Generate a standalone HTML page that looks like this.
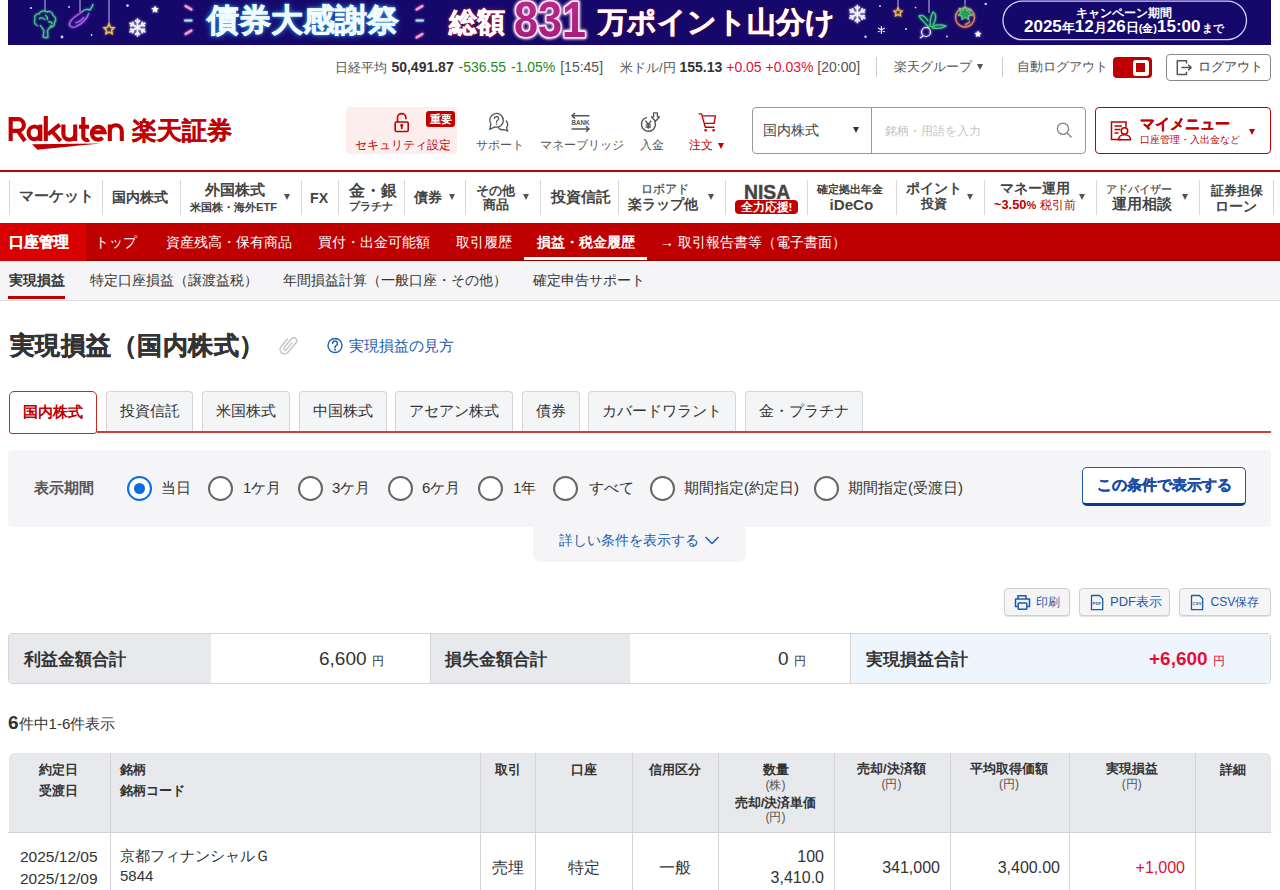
<!DOCTYPE html>
<html lang="ja"><head><meta charset="utf-8">
<style>
*{margin:0;padding:0;box-sizing:border-box}
html,body{width:1280px;height:890px;overflow:hidden;background:#fff}
body{font-family:"Liberation Sans",sans-serif;color:#333;position:relative}
.a{position:absolute;white-space:nowrap}
.c{display:flex;align-items:center;justify-content:center}
/* banner */
#banner{left:8px;top:0;width:1263px;height:45px;background:#1b0c6a;overflow:hidden}
/* top bar */
.tb{font-size:14px;line-height:20px;top:57px;color:#555}
.sep{position:absolute;width:1px;background:#ccc}
/* nav */
.nv{position:absolute;top:172px;height:50px;display:flex;flex-direction:column;align-items:center;justify-content:center;color:#333;font-weight:bold;text-align:center}
.nv .l1{font-size:15px;line-height:17px}
.nv .l2{font-size:15px;line-height:17px}
.nv .sm{font-size:12px;line-height:14px}
.nt{font-weight:bold;color:#444;line-height:20px}
.tri{position:absolute;width:0;height:0;border-left:3.25px solid transparent;border-right:3.25px solid transparent;border-top:6px solid #555}
/* red bar */
#red{left:0;top:223.3px;width:1280px;height:38.2px;background:#bf0000;border-bottom:2px solid #980000}
.rt{top:232px;color:#fff;font-size:14px;line-height:20px}
/* subnav */
#sub{left:0;top:261px;width:1280px;height:40px;background:#f5f5f7;border-bottom:1.6px solid #dedede}
.st{top:271px;color:#333;font-size:13.5px;line-height:20px}
/* tabs */
.tab{position:absolute;top:391px;height:41px;padding-bottom:2px;border:1px solid #d6d6d6;border-bottom:none;background:#f4f5f7;border-radius:4px 4px 0 0;font-size:15px;color:#333;display:flex;align-items:center;justify-content:center}
.radio{position:absolute;top:476px;width:25px;height:25px;border:2.5px solid #666;border-radius:50%;background:#fff}
.rl{top:478px;font-size:15px;line-height:20px;color:#333}
.hl{top:137px;font-size:11.8px;line-height:17px;color:#555}
.btn3{position:absolute;top:588px;height:28px;border:1px solid #cfcfcf;border-radius:4px;background:#f5f5f5;box-shadow:0 1px 1px rgba(0,0,0,.12);color:#1a5aae;font-size:14px;display:flex;align-items:center;justify-content:center}
th,td{position:absolute}
.thl{font-size:13px;font-weight:bold;color:#333;line-height:16px;text-align:center}
.thp2{font-size:12px;color:#555;line-height:16px;text-align:center}
.th{position:absolute;font-size:13px;font-weight:bold;color:#333;line-height:21px;text-align:center}
.thp{font-size:12px;font-weight:normal;color:#555;line-height:14px}
.vl{position:absolute;width:1px;background:#d5d5d8}
.td{position:absolute;font-size:16px;color:#333;line-height:21px}
</style></head><body>

<!-- BANNER -->
<svg class="a" style="left:0;top:0" width="1280" height="45" viewBox="0 0 1280 45">
<defs>
<filter id="gl" x="-30%" y="-30%" width="160%" height="160%"><feGaussianBlur stdDeviation="1.2" result="b"/><feMerge><feMergeNode in="b"/><feMergeNode in="SourceGraphic"/></feMerge></filter>
<filter id="gl2" x="-30%" y="-30%" width="160%" height="160%"><feGaussianBlur stdDeviation="1.8" result="b"/><feMerge><feMergeNode in="b"/><feMergeNode in="b"/><feMergeNode in="SourceGraphic"/></feMerge></filter>
</defs>
<rect x="8" y="0" width="1263" height="45" fill="#16086b"/>
<g fill="#fff" opacity=".85">
<circle cx="31" cy="8" r="1.1"/><circle cx="69" cy="7" r=".9"/><circle cx="62" cy="37" r="1.4"/><circle cx="91.6" cy="35" r=".9"/><circle cx="127.5" cy="5.6" r="1.3"/>
<circle cx="880" cy="6" r=".9"/><circle cx="915.6" cy="7.6" r=".9"/><circle cx="906" cy="29" r="1"/><circle cx="947" cy="36.5" r=".9"/><circle cx="865.5" cy="36.7" r="1.2"/><circle cx="985.7" cy="3.9" r="1.2"/>
</g>
<g fill="#fff" filter="url(#gl)">
<path d="M155 5.5l1.1 2.6 2.8.2-2.1 1.8.7 2.7-2.5-1.5-2.4 1.5.7-2.7-2.1-1.8 2.8-.2z"/>
<path d="M978 30.5l1 2.3 2.5.2-1.9 1.6.6 2.4-2.2-1.3-2.2 1.3.6-2.4-1.9-1.6 2.5-.2z"/>
</g>
<!-- strings -->
<g stroke="#d8d0f0" stroke-width="1" opacity=".9">
<line x1="45" y1="0" x2="45" y2="12"/><line x1="80" y1="0" x2="80" y2="12"/><line x1="109" y1="0" x2="109" y2="24"/>
<line x1="898" y1="0" x2="898" y2="9"/><line x1="929" y1="0" x2="929" y2="13"/><line x1="965" y1="0" x2="965" y2="5"/>
</g>
<!-- broccoli -->
<g fill="none" stroke="#3fd07a" stroke-width="1.2" filter="url(#gl)">
<path d="M38 26c-3-1-4.5-4-3-6.5-1.5-3 1-6 4-5.5 1-3 5-4 7.5-2 3-1.5 6.5.5 6.5 3.5 3 1 3.5 5 1.5 7 .5 3-2 5-4.5 4.5"/>
<path d="M40 25c1 2 3 3 4 6l-1 6c2 1 4 1 5 0l-.5-6c1-3 3-4 4-6"/>
<path d="M39 19c2-2 5-1 6 1M45 15c2 1 3 3 2 5M48 22c2-1 4 0 4 2"/>
</g>
<!-- eggplant -->
<g fill="none" stroke="#b760f0" stroke-width="1.2" filter="url(#gl)">
<path d="M82 12c-5 3-10 6-12 10-2 4 1 6 5 5 6-2 12-8 14-14"/><path d="M75 23c4-1 7-3 9-6"/>
<path d="M82 12c2-3 6-3 8-2 2-3 3-5 3-6" stroke="#4fd890"/>
</g>
<!-- star hanging -->
<path d="M109 24l1.6 3.4 3.6.4-2.7 2.4.8 3.6-3.3-1.9-3.2 1.9.8-3.6-2.7-2.4 3.6-.4z" fill="none" stroke="#f3c550" stroke-width="1.2" filter="url(#gl)"/>
<!-- snowflakes -->
<g stroke="#f4f0ff" stroke-width="1.6" stroke-linecap="round" filter="url(#gl)">
<path d="M137.5 27.5L137.5 19.0M137.5 22.8L139.6 20.7M137.5 22.8L135.4 20.7M137.5 27.5L130.1 23.2M133.5 25.2L132.7 22.3M133.5 25.2L130.6 25.9M137.5 27.5L130.1 31.8M133.5 29.8L130.6 29.1M133.5 29.8L132.7 32.7M137.5 27.5L137.5 36.0M137.5 32.2L135.4 34.3M137.5 32.2L139.6 34.3M137.5 27.5L144.9 31.8M141.5 29.8L142.3 32.7M141.5 29.8L144.4 29.1M137.5 27.5L144.9 23.2M141.5 25.2L144.4 25.9M141.5 25.2L142.3 22.3"/>
</g>
<g stroke="#f4f0ff" stroke-width="1.6" stroke-linecap="round" filter="url(#gl)">
<path d="M857.3 14.0L857.3 5.5M857.3 9.3L859.4 7.2M857.3 9.3L855.2 7.2M857.3 14.0L849.9 9.8M853.3 11.7L852.5 8.8M853.3 11.7L850.4 12.4M857.3 14.0L849.9 18.2M853.3 16.3L850.4 15.6M853.3 16.3L852.5 19.2M857.3 14.0L857.3 22.5M857.3 18.7L855.2 20.8M857.3 18.7L859.4 20.8M857.3 14.0L864.7 18.3M861.3 16.3L862.1 19.2M861.3 16.3L864.2 15.6M857.3 14.0L864.7 9.8M861.3 11.7L864.2 12.4M861.3 11.7L862.1 8.8"/>
</g>
<g stroke="#f4f0ff" stroke-width="1.2" stroke-linecap="round">
<path d="M881.4 26.5v7M878.4 28.2l6 3.5M878.4 31.7l6-3.5"/>
</g>
<path d="M898 8l1.3 2.7 3 .3-2.2 2 .6 2.9-2.7-1.5-2.6 1.5.6-2.9-2.2-2 3-.3z" fill="none" stroke="#f3c550" stroke-width="1.1" filter="url(#gl)"/>
<!-- turnip -->
<g fill="none" stroke="#3fd07a" stroke-width="1.3" filter="url(#gl)">
<path d="M929 28c-3-5-8-8-10-12 3-2 7 1 9 5M930 27c0-5 0-10 3-15 4 2 3 8 0 13M931 27c4-2 9-3 15 -1-3 2-8 3-14 2"/>
</g>
<g fill="none" stroke="#e9e4ff" stroke-width="1.2" filter="url(#gl)"><circle cx="926" cy="32" r="4.5"/><path d="M923 36l-3 2"/></g>
<!-- tomato -->
<g fill="none" stroke="#e8845a" stroke-width="1.3" filter="url(#gl)"><circle cx="965" cy="17.5" r="9.5"/><path d="M970 21c-1 2-3 3-5 3.5"/></g>
<path d="M959 8l4 3 2-5 2 5 4-2-2 4 4 2-5 1 1 4-4-3-3 3 0-4-4-1 3-2z" fill="#2e9a55" stroke="#6fe0a0" stroke-width=".8" filter="url(#gl)"/>
<!-- dashes -->
<g stroke-width="2.2" stroke-linecap="round" filter="url(#gl)">
<path d="M185.5 6l6 3.5" stroke="#ff9ad0"/><path d="M185 20.5h6.5" stroke="#a8e8ff"/><path d="M185.5 34l6-3.5" stroke="#ff9ad0"/>
<path d="M422.5 6l-6 3.5" stroke="#ff9ad0"/><path d="M423 20.5h-6.5" stroke="#a8e8ff"/><path d="M422.5 34l-6 3.5" stroke="#ff9ad0"/>
</g>
<!-- pill -->
<rect x="1003" y="1.2" width="243.5" height="38.5" rx="19.2" fill="none" stroke="#d6d0ff" stroke-width="1.3"/>
</svg>
<div id="saiken" class="a" style="left:207.2px;top:-1.25px;font-size:32.01px;line-height:42px;font-weight:bold;color:#f2fbff;text-shadow:0 0 3px #39b6ff,0 0 6px #2a8fe0;-webkit-text-stroke:.6px #f2fbff;letter-spacing:0">債券大感謝祭</div>
<div id="sogaku" class="a" style="left:448.9px;top:0.75px;font-size:28.44px;line-height:42px;font-weight:bold;color:#fff;text-shadow:0 0 2px #c02050,0 0 4px #c02050;-webkit-text-stroke:.5px #fff">総額</div>
<svg class="a" style="left:500px;top:0" width="100" height="45" viewBox="500 0 100 45"><defs><linearGradient id="g831" x1="0" y1="0" x2="0" y2="1"><stop offset="0" stop-color="#c02a90"/><stop offset="1" stop-color="#a01c78"/></linearGradient></defs>
<text x="514" y="37" font-family="Liberation Sans" font-weight="bold" font-size="50" fill="url(#g831)" stroke="#ffe6f6" stroke-width="3.2" paint-order="stroke" stroke-linejoin="round" textLength="72" lengthAdjust="spacingAndGlyphs" filter="url(#gl2)">831</text></svg>
<div id="man" class="a" style="left:597.8px;top:0.5px;font-size:28.86px;line-height:42px;font-weight:bold;color:#fff;text-shadow:0 0 2px #8a0a30,0 0 3px #8a0a30;-webkit-text-stroke:.5px #fff">万ポイント山分け</div>
<div id="camp1" class="a" style="left:1076px;top:3.5px;font-size:12.3px;line-height:18px;font-weight:bold;color:#fff">キャンペーン期間</div>
<div id="camp2" class="a" style="left:1024px;top:14.5px;font-size:17px;line-height:24px;font-weight:bold;color:#fff">2025<span style="font-size:13px">年</span>12<span style="font-size:13px">月</span>26<span style="font-size:13px">日</span><span style="font-size:11px">(金)</span>15:00<span style="font-size:10.5px;margin-left:2px">まで</span></div>


<!-- TOP BAR -->
<div class="a tb" style="left:334.5px;word-spacing:1px"><span style="font-size:13px">日経平均</span> <b style="color:#333">50,491.87</b> <span style="color:#1e8a1e">-536.55 -1.05%</span> [15:45]</div>
<div class="a tb" style="left:620px"><span style="font-size:13px">米ドル/円</span> <b style="color:#333">155.13</b> <span style="color:#e0103a">+0.05 +0.03%</span> [20:00]</div>
<div class="sep" style="left:876px;top:57px;height:20px"></div>
<div class="a tb" style="left:894px;font-size:13.3px">楽天グループ</div><div class="tri" style="left:976.5px;top:64px;border-left-width:3.5px;border-right-width:3.5px;border-top-width:6px"></div>
<div class="sep" style="left:1002px;top:57px;height:20px"></div>
<div class="a tb" style="left:1017px;font-size:13.3px">自動ログアウト</div>
<div class="a" style="left:1113px;top:57px;width:38.5px;height:21px;background:#c00000;border-radius:4px"><div class="a" style="left:19.5px;top:2.5px;width:16px;height:16px;background:#fff;border-radius:3px"><div class="a" style="left:3.8px;top:3.8px;width:8.4px;height:8.4px;background:#c00000"></div></div></div>
<div class="a" style="left:1166px;top:54px;width:105px;height:27px;border:1px solid #888;border-radius:4px;background:#fff"></div>
<svg class="a" style="left:1170px;top:55px" width="30" height="25" viewBox="1170 55 30 25" fill="none"><g stroke="#555" stroke-width="1.5" stroke-linejoin="round"><path d="M1186.5 63.5v-2.7h-9.2v13.6h9.2v-2.7"/><path d="M1181.5 67.6h9.5M1188.3 64.8l2.8 2.8-2.8 2.8"/></g></svg>
<div class="a tb" style="left:1198px;color:#444;font-size:13px">ログアウト</div>

<!-- HEADER -->
<svg class="a" style="left:0;top:100px" width="250" height="60" viewBox="0 100 250 60">
<g fill="none" stroke="#bf0000" stroke-width="4.1">
<path d="M10.7 141V119.1h7.3a5.9 5.9 0 0 1 0 11.8h-7.3M17.6 130.5L25 141"/>
<path d="M40.3 124.6V141"/><ellipse cx="34.4" cy="132.8" rx="5.8" ry="6.3"/>
<path d="M45.8 115.9V141M59.8 124.6L47.8 134.3M51.8 131L60.6 141"/>
<path d="M63.4 124.6v9.2a5.9 5.9 0 0 0 11.8 0v-9.2M75.2 133v8"/>
<path d="M83.3 117v19.5a3.6 3.6 0 0 0 5.6 3M79 126.7h10"/>
<path d="M91.8 132.2h12.7a6.4 6.4 0 1 0-1.9 5.6"/>
<path d="M109.8 141v-16.4M109.8 131.3a6 6 0 0 1 12 0V141"/>
</g>
<path d="M32 144.3L101 143.4C80 145.5 55 147.5 37.5 149.8Z" fill="#bf0000"/>
</svg>
<div class="a" style="left:132px;top:115px;font-size:25px;line-height:30px;font-weight:bold;color:#bf0000;-webkit-text-stroke:.3px #bf0000">楽天証券</div>
<div class="a" style="left:346px;top:107px;width:111px;height:47px;background:#fdeeee;border-radius:4px"></div>
<div class="a c" style="left:426px;top:111px;width:29px;height:16px;background:#c00000;color:#fff;font-size:11px;font-weight:bold;border-radius:3px">重要</div>
<div class="a hl" style="left:355px;color:#c00000">セキュリティ設定</div>
<div class="a hl" style="left:476px">サポート</div>
<div class="a hl" style="left:540px">マネーブリッジ</div>
<div class="a hl" style="left:640px">入金</div>
<div class="a hl" style="left:689px;color:#c00000">注文</div><div class="tri" style="left:717.5px;top:142.5px;border-top-color:#c00000"></div>
<!-- search -->
<div class="a" style="left:752px;top:107px;width:334px;height:47px;border:1px solid #999;border-radius:4px;background:#fff"></div>
<div class="a" style="left:871px;top:108px;width:1px;height:45px;background:#999"></div>
<div class="a" style="left:763px;top:120.5px;font-size:13.7px;line-height:20px;color:#444">国内株式</div>
<div class="tri" style="left:852.5px;top:127px;border-top-color:#333"></div>
<div class="a" style="left:885px;top:121.5px;font-size:11.6px;line-height:18px;color:#c4c4c4">銘柄・用語を入力</div>
<!-- mymenu -->
<div class="a" style="left:1095px;top:107px;width:176px;height:47px;border:1px solid #c00000;border-radius:4px;background:#fff"></div>
<div class="a" style="left:1140px;top:114px;font-size:14.5px;line-height:20px;color:#c00000;font-weight:bold;-webkit-text-stroke:.3px #c00000">マイメニュー</div>
<div class="a" style="left:1140px;top:132px;font-size:10.3px;line-height:15px;color:#c00000">口座管理・入出金など</div>
<div class="tri" style="left:1249px;top:128.5px;border-top-color:#c00000"></div>


<svg class="a" style="left:0;top:100px" width="1280" height="60" viewBox="0 100 1280 60" fill="none">
<!-- lock -->
<g stroke="#c00000" stroke-width="1.6"><path d="M397.5 122v-4.2a4.2 4.2 0 0 1 8.4 0v1.5"/><rect x="395.2" y="122" width="13" height="9.5" rx="1.2"/></g>
<path d="M401.7 125.2v3" stroke="#c00000" stroke-width="1.8" stroke-linecap="round"/><circle cx="401.7" cy="125.3" r="1.3" fill="#c00000"/>
<!-- support -->
<g stroke="#555" stroke-width="1.3" fill="none" stroke-linejoin="round"><path d="M494.74 126.87A6.8 6.8 0 1 0 490.93 124.2L489.8 129.3Z"/><path d="M505.84 120.52A5.2 5.2 0 0 1 506.48 127.84L507.8 131L503.85 129.52A5.2 5.2 0 0 1 498 127.1"/></g>
<path d="M494.4 118.6a2.1 2.1 0 1 1 3 1.9c-.6.3-.9.7-.9 1.4v.4" stroke="#555" stroke-width="1.3" fill="none" stroke-linecap="round"/><circle cx="496.5" cy="124.2" r=".8" fill="#555"/>
<!-- bank -->
<g stroke="#555" stroke-width="1.5"><path d="M589.5 115.8h-17.5M575 113l-3 2.8 3 2.8"/><path d="M571.5 129h17.5M586 126.2l3 2.8-3 2.8"/></g>
<text x="571.5" y="124.6" font-family="Liberation Sans" font-weight="bold" font-size="6.6" fill="#555" textLength="18" lengthAdjust="spacingAndGlyphs">BANK</text>
<!-- yen -->
<g stroke="#555" stroke-width="1.4" fill="none"><path d="M654.6 121a7 7 0 1 1-7.6-3.6"/><path d="M645.4 120.6l2.9 3.9 2.9-3.9M648.3 124.5v4.3M645.6 124.9h5.4M645.6 127h5.4"/>
<path d="M653.6 112.8h3.8v4h2.2l-4.1 4.4-4.1-4.4h2.2z" stroke-width="1.3" stroke-linejoin="round"/></g>
<!-- cart -->
<g stroke="#c00000" stroke-width="1.35" fill="none" stroke-linejoin="round"><path d="M698.6 113.9h3l3.7 13.3h9.2"/><path d="M702.7 115.9h12.7l-1.3 7.4h-9.4"/></g>
<circle cx="705.6" cy="130.3" r="1.25" fill="#c00000"/><circle cx="713.6" cy="130.3" r="1.25" fill="#c00000"/>
<!-- magnifier -->
<g stroke="#888" stroke-width="1.4"><circle cx="1063" cy="128.8" r="5.6"/><path d="M1067.2 133l4.3 4.5"/></g>
<!-- mymenu icon -->
<g stroke="#c00000" stroke-width="1.5"><path d="M1121 139.5h-9.5v-17.5h14.5v5.5"/><path d="M1114.5 126h7.5M1114.5 129.5h6M1114.5 133h4"/><circle cx="1124.5" cy="131" r="3.2"/><path d="M1118.5 139.8c0-3 2.5-5 6-5s6 2 6 5z"/></g>
</svg>

<!-- red line -->
<div class="a" style="left:0;top:170px;width:1280px;height:2px;background:#c00000"></div>

<!-- NAV -->

<!-- nav separators -->
<div class="tri" style="left:284.05px;top:194.40px"></div><div class="tri" style="left:448.65px;top:194.40px"></div><div class="tri" style="left:522.65px;top:194.40px"></div><div class="tri" style="left:708.25px;top:194.40px"></div><div class="tri" style="left:966.95px;top:194.00px"></div><div class="tri" style="left:1078.95px;top:194.40px"></div><div class="tri" style="left:1181.75px;top:194.40px"></div>
<div class="sep" style="left:9px;top:180px;height:35px;background:#d8d8d8"></div><div class="sep" style="left:102px;top:180px;height:35px;background:#d8d8d8"></div><div class="sep" style="left:180px;top:180px;height:35px;background:#d8d8d8"></div><div class="sep" style="left:301px;top:180px;height:35px;background:#d8d8d8"></div><div class="sep" style="left:338px;top:180px;height:35px;background:#d8d8d8"></div><div class="sep" style="left:404px;top:180px;height:35px;background:#d8d8d8"></div><div class="sep" style="left:465px;top:180px;height:35px;background:#d8d8d8"></div><div class="sep" style="left:540px;top:180px;height:35px;background:#d8d8d8"></div><div class="sep" style="left:618px;top:180px;height:35px;background:#d8d8d8"></div><div class="sep" style="left:725px;top:180px;height:35px;background:#d8d8d8"></div><div class="sep" style="left:807px;top:180px;height:35px;background:#d8d8d8"></div><div class="sep" style="left:896px;top:180px;height:35px;background:#d8d8d8"></div><div class="sep" style="left:984px;top:180px;height:35px;background:#d8d8d8"></div><div class="sep" style="left:1096px;top:180px;height:35px;background:#d8d8d8"></div><div class="sep" style="left:1199px;top:180px;height:35px;background:#d8d8d8"></div><div class="sep" style="left:1273px;top:180px;height:35px;background:#d8d8d8"></div>
<div id="nav_market" class="a nt" style="left:18.7px;top:186px;font-size:15.06px">マーケット</div>
<div id="nav_kokunai" class="a nt" style="left:111.8px;top:187px;font-size:14.26px">国内株式</div>
<div id="nav_gaikoku1" class="a nt" style="left:205px;top:179.75px;font-size:14.83px">外国株式</div>
<div id="nav_gaikoku2" class="a nt" style="left:190px;top:198.85px;font-size:11.18px;line-height:16px">米国株・海外ETF</div>
<div id="nav_fx" class="a nt" style="left:310.1px;top:187.95px;font-size:14.19px">FX</div>
<div id="nav_kingin1" class="a nt" style="left:348.5px;top:180.95px;font-size:15.57px">金・銀</div>
<div id="nav_kingin2" class="a nt" style="left:348.9px;top:197.65px;font-size:10.79px;line-height:16px">プラチナ</div>
<div id="nav_saiken" class="a nt" style="left:413.7px;top:187px;font-size:14.36px">債券</div>
<div id="nav_sonota1" class="a nt" style="left:475.8px;top:180.8px;font-size:12.78px">その他</div>
<div id="nav_sonota2" class="a nt" style="left:482.5px;top:195.3px;font-size:13.47px">商品</div>
<div id="nav_toushin" class="a nt" style="left:550.5px;top:187px;font-size:14.76px">投資信託</div>
<div id="nav_robo1" class="a nt" style="color:#444;-webkit-text-stroke:.2px #444;left:641.1px;top:180.75px;font-size:12.27px;line-height:16px;font-weight:normal">ロボアド</div>
<div id="nav_robo2" class="a nt" style="left:628px;top:193.5px;font-size:14.33px">楽ラップ他</div>
<div id="nav_nisa" class="a nt" style="-webkit-text-stroke:.4px #444;left:744px;top:180.55px;font-size:19.35px;line-height:22px;font-family:'Liberation Sans',sans-serif">NISA</div>
<div class="a c" style="left:735px;top:200px;width:63px;height:14px;background:#c00000;border-radius:4px;color:#fff;font-size:11.5px;font-weight:bold">全力応援!</div>
<div id="nav_ideco1" class="a nt" style="left:817.2px;top:181.4px;font-size:11.24px;line-height:16px">確定拠出年金</div>
<div id="nav_ideco2" class="a nt" style="left:829.5px;top:195.4px;font-size:15.17px">iDeCo</div>
<div id="nav_point1" class="a nt" style="left:906px;top:177.9px;font-size:14.27px">ポイント</div>
<div id="nav_point2" class="a nt" style="left:920.9px;top:194.4px;font-size:12.77px">投資</div>
<div id="nav_money1" class="a nt" style="left:999.7px;top:179.35px;font-size:13.68px">マネー運用</div>
<div id="nav_money2" class="a nt" style="left:994px;top:195.2px;font-size:12.8px;color:#c00000">~3.50<span style="font-size:11px">%</span> <span style="font-size:12px;font-weight:normal">税引前</span></div>
<div id="nav_adv1" class="a nt" style="color:#444;-webkit-text-stroke:.2px #444;left:1105.8px;top:181px;font-size:11.24px;line-height:16px;font-weight:normal">アドバイザー</div>
<div id="nav_adv2" class="a nt" style="left:1111.6px;top:193.75px;font-size:14.5px">運用相談</div>
<div id="nav_loan1" class="a nt" style="left:1210.6px;top:180.65px;font-size:13.1px">証券担保</div>
<div id="nav_loan2" class="a nt" style="left:1215.1px;top:195.7px;font-size:13.98px">ローン</div>


<!-- RED BAR -->
<div id="red" class="a"></div>
<div class="a" style="left:0;top:223.3px;width:86px;height:38.2px;background:#d80000"></div>
<div class="a rt" style="left:9px;font-weight:bold;font-size:15px;-webkit-text-stroke:.3px #fff">口座管理</div>
<div class="a rt" style="left:95px">トップ</div>
<div class="a rt" style="left:166px">資産残高・保有商品</div>
<div class="a rt" style="left:318px">買付・出金可能額</div>
<div class="a rt" style="left:456px">取引履歴</div>
<div class="a rt" style="left:537px;font-weight:bold">損益・税金履歴</div>
<div class="a" style="left:524px;top:257px;width:123px;height:3px;background:#fff"></div>
<div class="a rt" style="left:660px">→ 取引報告書等（電子書面）</div>

<!-- SUB NAV -->
<div id="sub" class="a"></div>
<div class="a st" style="left:9px;font-weight:bold">実現損益</div>
<div class="a" style="left:8px;top:296px;width:57px;height:3px;background:#c00000"></div>
<div class="a st" style="left:90px">特定口座損益（譲渡益税）</div>
<div class="a st" style="left:283px">年間損益計算（一般口座・その他）</div>
<div class="a st" style="left:533px">確定申告サポート</div>

<!-- TITLE -->
<div class="a" style="left:10px;top:329px;font-size:25.2px;letter-spacing:.45px;line-height:32px;font-weight:bold;color:#333;-webkit-text-stroke:.4px #333">実現損益（国内株式）</div>
<svg class="a" style="left:270px;top:330px" width="80" height="30" viewBox="270 330 80 30" fill="none">
<path transform="translate(287.8 345.5) rotate(40) translate(-4.5 -11.5)" d="M0 7v9.5a4.5 4.5 0 0 0 9 0V4a3 3 0 0 0-6 0v11.5a1.5 1.5 0 0 0 3 0V7" stroke="#c8c8c8" stroke-width="1.6" stroke-linecap="round" fill="none"/>
<circle cx="335" cy="345.5" r="7" stroke="#1f5fb5" stroke-width="1.4"/>
<path d="M332.6 343.4a2.4 2.4 0 1 1 3.4 2.2c-.7.4-1 .8-1 1.6v.6" stroke="#1f5fb5" stroke-width="1.5" stroke-linecap="round"/><circle cx="335" cy="349.8" r=".95" fill="#1f5fb5"/>
</svg>
<div class="a" style="left:349px;top:336px;font-size:15px;line-height:20px;color:#1a5aae">実現損益の見方</div>

<!-- TABS -->
<div class="tab" style="left:9px;width:88px;background:#fff;border:1.6px solid #c62828;color:#c00000;font-weight:bold;height:42.5px;padding-bottom:0;padding-top:1px;border-radius:5px 5px 3px 3px">国内株式</div>
<div class="tab" style="left:106px;width:87px">投資信託</div>
<div class="tab" style="left:202px;width:88px">米国株式</div>
<div class="tab" style="left:299px;width:88px">中国株式</div>
<div class="tab" style="left:395px;width:118px">アセアン株式</div>
<div class="tab" style="left:522px;width:58px">債券</div>
<div class="tab" style="left:588px;width:148px">カバードワラント</div>
<div class="tab" style="left:745px;width:118px">金・プラチナ</div>
<div class="a" style="left:97px;top:431.2px;width:1174px;height:1.8px;background:#d23c3c"></div>

<!-- FILTER -->
<div class="a" style="left:8px;top:450px;width:1263px;height:77px;background:#f5f5f7;border-radius:4px"></div>
<div class="a" style="left:533px;top:520px;width:213px;height:42px;background:#f5f5f7;border-radius:0 0 8px 8px"></div>
<div class="a rl" style="left:34px;font-weight:bold;color:#555">表示期間</div>
<div class="radio" style="left:127px;border-color:#0b6be0"><div class="a" style="left:4.5px;top:4.5px;width:11px;height:11px;border-radius:50%;background:#0b6be0"></div></div><div class="a rl" style="left:161px">当日</div>
<div class="radio" style="left:208px"></div><div class="a rl" style="left:243px">1ケ月</div>
<div class="radio" style="left:298px"></div><div class="a rl" style="left:332px">3ケ月</div>
<div class="radio" style="left:388px"></div><div class="a rl" style="left:422px">6ケ月</div>
<div class="radio" style="left:478px"></div><div class="a rl" style="left:513px">1年</div>
<div class="radio" style="left:553px"></div><div class="a rl" style="left:589px">すべて</div>
<div class="radio" style="left:650px"></div><div class="a rl" style="left:684px">期間指定(約定日)</div>
<div class="radio" style="left:814px"></div><div class="a rl" style="left:848px">期間指定(受渡日)</div>

<div class="a c" style="left:1082px;top:467px;width:164px;height:39px;background:#fff;border:1.3px solid #1f5bb5;border-bottom:3.5px solid #0c3a86;border-radius:5px;color:#1b4ea6;font-weight:bold;font-size:15px;-webkit-text-stroke:.35px #1b4ea6">この条件で表示する</div>
<div class="a" style="left:559px;top:530px;font-size:14px;line-height:20px;color:#1a5aae">詳しい条件を表示する</div><svg class="a" style="left:700px;top:530px" width="25" height="20" viewBox="700 530 25 20" fill="none"><path d="M705.5 537l6.5 6.5 6.5-6.5" stroke="#1a5aae" stroke-width="1.5"/></svg>

<!-- BUTTONS -->
<div class="btn3" style="left:1004px;width:66px"></div>
<div class="btn3" style="left:1079px;width:91px"></div>
<div class="btn3" style="left:1179px;width:92px"></div>
<svg class="a" style="left:1000px;top:585px" width="280" height="35" viewBox="1000 585 280 35" fill="none">
<g stroke="#1a5aae" stroke-width="1.5" stroke-linejoin="round"><path d="M1018 599v-3.2h8v3.2"/><path d="M1017.8 606.5h-2.3v-7.5h14v7.5h-2.3"/><rect x="1018.2" y="603" width="8.6" height="6.3" rx=".8"/></g>
<g stroke="#1a5aae" stroke-width="1.3" stroke-linejoin="round"><path d="M1091.5 595.5h8l3.2 3.2v11h-11.2z"/></g>
<text x="1092.6" y="605.3" font-family="Liberation Sans" font-weight="bold" font-size="4.2" fill="#1a5aae">PDF</text>
<g stroke="#1a5aae" stroke-width="1.3" stroke-linejoin="round"><path d="M1191.5 595.5h8l3.2 3.2v11h-11.2z"/></g>
<text x="1192.6" y="605.3" font-family="Liberation Sans" font-weight="bold" font-size="4.4" fill="#1a5aae">CSV</text>
</svg>
<div id="btn_print_txt" class="a" style="left:1035.7px;top:592.1px;font-size:12.44px;line-height:20px;color:#1a5aae">印刷</div>
<div class="a" style="left:1110px;top:592px;font-size:13px;line-height:20px;color:#1a5aae">PDF表示</div>
<div id="btn_csv_txt" class="a" style="left:1210.5px;top:592px;font-size:12.11px;line-height:20px;color:#1a5aae">CSV保存</div>

<!-- SUMMARY -->
<div class="a" style="left:8px;top:633px;width:1263px;height:51px;border:1px solid #d5d5d8;border-radius:4px;overflow:hidden;background:#fff">
  <div class="a" style="left:0;top:0;width:202px;height:49px;background:#e8e9ec"></div>
  <div class="a" style="left:421px;top:0;width:200px;height:49px;background:#e8e9ec;border-left:1px solid #d5d5d8"></div>
  <div class="a" style="left:841px;top:0;width:422px;height:49px;background:#eef5fd;border-left:1px solid #d5d5d8"></div>
</div>
<div class="a" style="left:24px;top:648.5px;font-size:17px;line-height:22px;font-weight:bold">利益金額合計</div>
<div class="a" style="left:445px;top:648.5px;font-size:17px;line-height:22px;font-weight:bold">損失金額合計</div>
<div class="a" style="left:866px;top:648.5px;font-size:17px;line-height:22px;font-weight:bold">実現損益合計</div>
<div class="a" style="left:319px;top:648px;font-size:19px;line-height:22px">6,600 <span style="font-size:12px">円</span></div>
<div class="a" style="left:778px;top:648px;font-size:19px;line-height:22px">0 <span style="font-size:12px">円</span></div>
<div class="a" style="left:1149px;top:648px;font-size:19px;line-height:22px;color:#e0103a;font-weight:bold">+6,600 <span style="font-size:12px;font-weight:normal">円</span></div>

<div class="a" style="left:8px;top:712px;font-size:15px;line-height:22px;color:#333"><b style="font-size:19px">6</b>件中1-6件表示</div>

<!-- TABLE -->
<div class="a" style="left:8.5px;top:752.8px;width:1262.5px;height:79.5px;background:#e8e9ec;border-radius:5px 5px 0 0"></div>
<div class="a" style="left:8px;top:832px;width:1263px;height:1px;background:#d2d2d6"></div>
<div class="vl" style="left:110px;top:752.8px;height:138px"></div>
<div class="vl" style="left:480px;top:752.8px;height:138px"></div>
<div class="vl" style="left:535px;top:752.8px;height:138px"></div>
<div class="vl" style="left:632px;top:752.8px;height:138px"></div>
<div class="vl" style="left:717.5px;top:752.8px;height:138px"></div>
<div class="vl" style="left:833.5px;top:752.8px;height:138px"></div>
<div class="vl" style="left:949.5px;top:752.8px;height:138px"></div>
<div class="vl" style="left:1068.5px;top:752.8px;height:138px"></div>
<div class="vl" style="left:1195px;top:752.8px;height:138px"></div>

<div class="a thl" style="left:-11.5px;top:761.5px;width:140px">約定日</div>
<div class="a thl" style="left:-11.5px;top:783.0px;width:140px">受渡日</div>
<div class="a thl" style="left:120px;top:761.5px;text-align:left">銘柄</div>
<div class="a thl" style="left:120px;top:783px;text-align:left">銘柄コード</div>
<div class="a thl" style="left:480.0px;top:761.5px;width:55px">取引</div>
<div class="a thl" style="left:535.0px;top:761.5px;width:97px">口座</div>
<div class="a thl" style="left:631.8px;top:761.5px;width:86px">信用区分</div>
<div class="a thl" style="left:705.5px;top:761.7px;width:140px">数量</div>
<div class="a thp2" style="left:705.5px;top:776.7px;width:140px">(株)</div>
<div class="a thl" style="left:705.5px;top:795.4px;width:140px">売却/決済単価</div>
<div class="a thp2" style="left:705.5px;top:808.6px;width:140px">(円)</div>
<div class="a thl" style="left:821.4px;top:761.2px;width:140px">売却/決済額</div>
<div class="a thp2" style="left:821.4px;top:776.0px;width:140px">(円)</div>
<div class="a thl" style="left:939.0px;top:761.2px;width:140px">平均取得価額</div>
<div class="a thp2" style="left:939.0px;top:776.0px;width:140px">(円)</div>
<div class="a thl" style="left:1061.7px;top:761.2px;width:140px">実現損益</div>
<div class="a thp2" style="left:1061.7px;top:776.0px;width:140px">(円)</div>
<div class="a thl" style="left:1195.0px;top:761.5px;width:76px">詳細</div>
<div class="td" style="left:20px;top:846px;line-height:22px;font-size:15.5px">2025/12/05<br>2025/12/09</div>
<div class="td" style="left:120px;top:846px;line-height:20px;font-size:15px">京都フィナンシャルＧ<br>5844</div>
<div class="td" style="left:480px;width:55px;top:857px;text-align:center">売埋</div>
<div class="td" style="left:535px;width:97px;top:857px;text-align:center">特定</div>
<div class="td" style="left:632px;width:86px;top:857px;text-align:center">一般</div>
<div class="td" style="left:718px;width:106px;top:846px;text-align:right;line-height:21px">100<br>3,410.0</div>
<div class="td" style="left:833px;width:107px;top:857px;text-align:right">341,000</div>
<div class="td" style="left:949px;width:111px;top:857px;text-align:right">3,400.00</div>
<div class="td" style="left:1068px;width:117px;top:857px;text-align:right;color:#e0103a">+1,000</div>


</body></html>
